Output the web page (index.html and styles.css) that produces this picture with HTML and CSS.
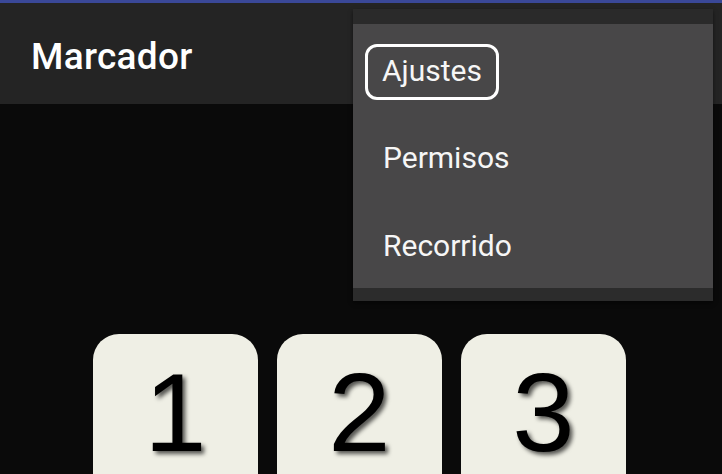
FILE: index.html
```html
<!DOCTYPE html>
<html lang="es">
<head>
<meta charset="utf-8">
<title>Marcador</title>
<link rel="stylesheet" href="styles.css">
</head>
<body>
<div class="status"></div>
<header class="appbar">
  <h1 class="title">Marcador</h1>
</header>
<main class="pad">
  <div class="key"><span class="digit">1</span></div>
  <div class="key"><span class="digit">2</span></div>
  <div class="key"><span class="digit">3</span></div>
</main>
<nav class="menu">
  <div class="menu-cap"></div>
  <div class="menu-body">
    <div class="item"><span class="focus">Ajustes</span></div>
    <div class="item">Permisos</div>
    <div class="item">Recorrido</div>
  </div>
  <div class="menu-foot"></div>
</nav>
</body>
</html>
```
FILE: styles.css
```css
html, body {
  margin: 0;
  padding: 0;
  background: #0a0a0a;
  overflow: hidden;
  height: 474px;
}
body {
  position: relative;
  font-family: Roboto, "Noto Sans", sans-serif;
}
.status {
  height: 3px;
  background: #3a4898;
}
.appbar {
  height: 101px;
  box-sizing: border-box;
  background: #242424;
  padding: 35px 0 0 31px;
}
.title {
  margin: 0;
  font-size: 37px;
  line-height: 37px;
  font-weight: 500;
  letter-spacing: 0.3px;
  color: #ffffff;
}
.pad {
  display: flex;
  gap: 19px;
  padding: 230px 0 0 93px;
}
.key {
  flex: 0 0 165px;
  height: 165px;
  border-radius: 26px;
  background: #efefe5;
  display: flex;
  align-items: center;
  justify-content: center;
}
.digit {
  font-family: "Liberation Sans", Arial, sans-serif;
  font-size: 112px;
  line-height: 112px;
  color: #000;
  text-shadow: 3px 3px 4px rgba(0, 0, 0, 0.65);
  margin-top: -8px;
}
.menu {
  position: absolute;
  top: 9px;
  left: 353px;
  width: 360px;
  box-shadow: 0 2px 4px rgba(0, 0, 0, 0.5);
}
.menu-cap {
  height: 15px;
  background: #2a2a2a;
}
.menu-foot {
  height: 13px;
  background: #2c2c2c;
}
.menu-body {
  background: #484748;
}
.item {
  height: 88px;
  box-sizing: border-box;
  padding: 3px 0 0 30px;
  display: flex;
  align-items: center;
  font-size: 30px;
  color: #f6f6f6;
}
.focus {
  display: inline-flex;
  align-items: center;
  height: 48px;
  margin: 4px 0 0 -18px;
  padding: 0 14px 2px 14px;
  border: 3.5px solid #ffffff;
  border-radius: 12px;
}
```
